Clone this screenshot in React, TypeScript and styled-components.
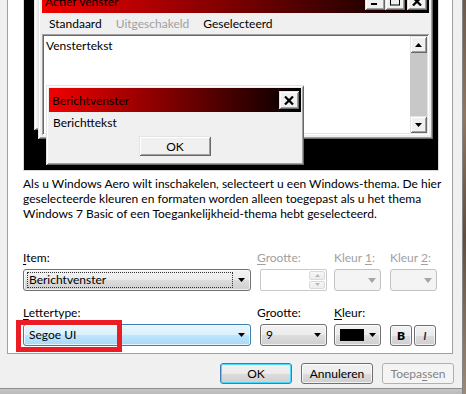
import React from "react";
import styled, { createGlobalStyle, css } from "styled-components";

const GlobalStyle = createGlobalStyle`
  html, body { margin: 0; padding: 0; }
  body {
    width: 466px; height: 394px; overflow: hidden; background: #f0f0f0;
    font-family: Lato, "Noto Sans", sans-serif; font-size: 12px; color: #000;
  }
  * { box-sizing: border-box; }
  u { text-decoration: underline; text-underline-offset: 2px; }
`;

const raised = css`
  background: #f0f0f0;
  box-shadow: inset 1px 1px 0 #e3e3e3, inset -1px -1px 0 #696969,
    inset 2px 2px 0 #ffffff, inset -2px -2px 0 #a0a0a0;
`;

const aeroButton = css`
  border: 1px solid #707070;
  border-radius: 3px;
  background: linear-gradient(180deg, #f2f2f2 0%, #ebebeb 50%, #dddddd 51%, #cfcfcf 100%);
  box-shadow: inset 0 0 0 1px rgba(255, 255, 255, 0.7);
`;

const Screen = styled.div`
  display: flex; width: 466px; height: 394px; overflow: hidden;
`;

const DialogWindow = styled.div`
  width: 463px; flex: none; display: flex; flex-direction: column;
  background: #f0f0f0; border-right: 1px solid #858585;
`;

const DesktopEdge = styled.div`
  flex: 1;
  background: linear-gradient(180deg, #6b5a4c 0%, #8f7661 30%, #5f4d3f 60%, #9b8a78 100%);
`;

const Panel = styled.div`
  margin-left: 7px; width: 446px; height: 354px; flex: none;
  background: #fff; border: 1px solid #a0a0a0; border-top: none;
  overflow: hidden; padding-left: 15px;
`;

const PreviewFrame = styled.div`
  margin-top: -21px; width: 416px; height: 192px;
  border: 1px solid #d9d9d9; background: #000;
  position: relative; overflow: hidden;
`;

const PreviewWindow = styled.div<{ $left: number; $top: number; $w: number; $h: number; $pad: number }>`
  position: absolute;
  left: ${(p) => p.$left}px; top: ${(p) => p.$top}px;
  width: ${(p) => p.$w}px; height: ${(p) => p.$h}px;
  padding: ${(p) => p.$pad}px;
  display: flex; flex-direction: column;
  ${raised}
`;

const TitleBar = styled.div<{ $inactive?: boolean }>`
  height: 24px; flex: none; display: flex; align-items: center;
  justify-content: space-between; padding: 0 2px 0 3px;
  background: ${(p) =>
    p.$inactive
      ? "linear-gradient(90deg, #808080, #c0c0c0)"
      : "linear-gradient(90deg, #f20000 0%, #000000 100%)"};
  color: #000; white-space: nowrap;
`;

const CaptionButtons = styled.div`
  display: flex; align-items: center;
`;

const CaptionButton = styled.div<{ $gapLeft?: number }>`
  width: 20px; height: 18px; display: flex; align-items: center; justify-content: center;
  margin-left: ${(p) => p.$gapLeft ?? 0}px;
  ${raised}
`;

const MenuBar = styled.div`
  height: 21px; flex: none; display: flex; align-items: center; background: #f0f0f0;
`;

const MenuItem = styled.span<{ $disabled?: boolean }>`
  padding: 0 7px; color: ${(p) => (p.$disabled ? "#a0a0a0" : "#000")};
`;

const ClientArea = styled.div`
  flex: 1; display: flex; padding: 2px; background: #fff;
  box-shadow: inset 1px 1px 0 #a0a0a0, inset -1px -1px 0 #ffffff,
    inset 2px 2px 0 #696969, inset -2px -2px 0 #e3e3e3;
`;

const ClientText = styled.div`
  flex: 1; padding: 2px 2px; line-height: 16px;
`;

const ScrollBar = styled.div`
  width: 17px; display: flex; flex-direction: column; background: #c8c8c8;
`;

const ScrollButton = styled.div`
  width: 17px; height: 17px; flex: none; display: flex; align-items: center; justify-content: center;
  ${raised}
`;

const ScrollTrack = styled.div`
  flex: 1;
`;

const MessageBody = styled.div`
  flex: 1; display: flex; flex-direction: column; align-items: center;
  padding-top: 3px;
`;

const MessageText = styled.div`
  align-self: stretch; padding-left: 4px; line-height: 16px;
`;

const ClassicButton = styled.div`
  margin-top: 5px; width: 72px; height: 20px; display: flex; align-items: center; justify-content: center;
  ${raised}
`;

const Explanation = styled.p`
  margin: 5px 0 29px; line-height: 15px; white-space: nowrap;
`;

const FormGrid = styled.div`
  display: grid; grid-template-columns: 237px 74px 56px 47px; row-gap: 14px;
`;

const Field = styled.div`
  display: flex; flex-direction: column; gap: 4px;
`;

const Label = styled.div<{ $disabled?: boolean; $shift?: number }>`
  height: 15px; line-height: 15px; white-space: nowrap;
  margin-left: ${(p) => p.$shift ?? 0}px;
  color: ${(p) => (p.$disabled ? "#a0a0a0" : "#000")};
`;

const HighlightAnchor = styled.div`
  position: relative;
`;

const RedHighlight = styled.div`
  position: absolute; left: -7px; top: -4px; width: 106px; height: 32px;
  border: 5px solid #ec1c24; pointer-events: none;
`;

const Combo = styled.div<{ $w: number; $variant?: "normal" | "hover" | "disabled" }>`
  width: ${(p) => p.$w}px; height: 22px; display: flex; align-items: center;
  padding: 0 0 0 3px; position: relative;
  ${aeroButton}
  ${(p) =>
    p.$variant === "hover" &&
    css`
      border-color: #3c7fb1;
      background: linear-gradient(180deg, #eaf6fd 0%, #d9f0fc 50%, #bee6fd 51%, #a7d9f5 100%);
    `}
  ${(p) =>
    p.$variant === "disabled" &&
    css`
      border-color: #bfc3c5;
      background: #f4f4f4;
      box-shadow: none;
    `}
`;

const ComboText = styled.div<{ $focus?: boolean }>`
  flex: 1; height: 16px; line-height: 14px; padding-left: 1px;
  border: 1px dotted ${(p) => (p.$focus ? "#333" : "transparent")};
  white-space: nowrap;
`;

const ArrowSlot = styled.div`
  width: 17px; height: 100%; flex: none; display: flex; align-items: center; justify-content: center;
`;

const Swatch = styled.div`
  width: 24px; height: 12px; background: #000; margin-left: 2px; flex: none;
`;

const SwatchFill = styled.div`
  flex: 1;
`;

const SpinBox = styled.div`
  width: 67px; height: 22px; display: flex; justify-content: flex-end;
  border: 1px solid #c9c9c9; border-radius: 2px; background: #fff; padding: 1px 1px 1px 0;
`;

const SpinButtons = styled.div`
  width: 16px; display: flex; flex-direction: column; gap: 1px;
`;

const SpinButton = styled.div`
  flex: 1; display: flex; align-items: center; justify-content: center;
  border: 1px solid #dadada; border-radius: 2px; background: linear-gradient(#f7f7f7, #ececec);
`;

const StyleButtons = styled.div`
  display: flex; gap: 2px; align-items: flex-end; height: 22px;
`;

const StyleButton = styled.div<{ $italic?: boolean }>`
  width: 22px; height: 21px; display: flex; align-items: center; justify-content: center;
  font-weight: ${(p) => (p.$italic ? 600 : 800)};
  font-style: ${(p) => (p.$italic ? "italic" : "normal")};
  color: ${(p) => (p.$italic ? "#1c1c50" : "#000")};
  ${aeroButton}
`;

const ButtonRow = styled.div`
  height: 34px; flex: none; display: flex; justify-content: flex-end; gap: 9px;
  padding: 9px 8px 0 0;
`;

const DialogButton = styled.div<{ $kind?: "default" | "normal" | "disabled" }>`
  width: 72px; height: 21px; display: flex; align-items: center; justify-content: center;
  ${aeroButton}
  ${(p) =>
    p.$kind === "default" &&
    css`
      border-color: #3c7fb1;
      box-shadow: inset 0 0 0 1px #48d8fb;
    `}
  ${(p) =>
    p.$kind === "disabled" &&
    css`
      border-color: #adb2b5;
      background: #f4f4f4;
      box-shadow: none;
      color: #838383;
    `}
`;

const BottomEdge = styled.div`
  margin-top: auto; height: 6px; flex: none;
  background: linear-gradient(180deg, #8e8e8e 0px, #8e8e8e 1px, #c6c6c6 1px, #b9b9b9 100%);
`;

const DownArrow = ({ color = "#000", w = 7, h = 4 }: { color?: string; w?: number; h?: number }) => (
  <svg width={w} height={h} viewBox={`0 0 ${w} ${h}`}>
    <path d={`M0 0H${w}L${w / 2} ${h}Z`} fill={color} />
  </svg>
);

const UpArrow = ({ color = "#000", w = 7, h = 4 }: { color?: string; w?: number; h?: number }) => (
  <svg width={w} height={h} viewBox={`0 0 ${w} ${h}`}>
    <path d={`M0 ${h}H${w}L${w / 2} 0Z`} fill={color} />
  </svg>
);

const CloseGlyph = () => (
  <svg width="10" height="9" viewBox="0 0 10 9">
    <path d="M1 0.5L9 8.5M9 0.5L1 8.5" stroke="#000" strokeWidth="2.2" />
  </svg>
);

const MinGlyph = () => (
  <svg width="10" height="10" viewBox="0 0 10 10">
    <rect x="1" y="7" width="6" height="2" fill="#000" />
  </svg>
);

const MaxGlyph = () => (
  <svg width="10" height="10" viewBox="0 0 10 10">
    <rect x="0.5" y="0.5" width="9" height="8.5" fill="none" stroke="#000" />
    <rect x="0" y="0" width="10" height="2" fill="#000" />
  </svg>
);

export default function App() {
  return (
    <>
      <GlobalStyle />
      <Screen>
        <DialogWindow>
          <Panel>
            <PreviewFrame>
              <PreviewWindow $left={10} $top={0} $w={372} $h={150} $pad={4}>
                <TitleBar $inactive />
              </PreviewWindow>
              <PreviewWindow $left={14} $top={5} $w={395} $h={154} $pad={4}>
                <TitleBar>
                  <span>Actief venster</span>
                  <CaptionButtons>
                    <CaptionButton><MinGlyph /></CaptionButton>
                    <CaptionButton><MaxGlyph /></CaptionButton>
                    <CaptionButton $gapLeft={2}><CloseGlyph /></CaptionButton>
                  </CaptionButtons>
                </TitleBar>
                <MenuBar>
                  <MenuItem>Standaard</MenuItem>
                  <MenuItem $disabled>Uitgeschakeld</MenuItem>
                  <MenuItem>Geselecteerd</MenuItem>
                </MenuBar>
                <ClientArea>
                  <ClientText>Venstertekst</ClientText>
                  <ScrollBar>
                    <ScrollButton><UpArrow /></ScrollButton>
                    <ScrollTrack />
                    <ScrollButton><DownArrow /></ScrollButton>
                  </ScrollBar>
                </ClientArea>
              </PreviewWindow>
              <PreviewWindow $left={22} $top={105} $w={258} $h={80} $pad={3}>
                <TitleBar>
                  <span>Berichtvenster</span>
                  <CaptionButton><CloseGlyph /></CaptionButton>
                </TitleBar>
                <MessageBody>
                  <MessageText>Berichttekst</MessageText>
                  <ClassicButton>OK</ClassicButton>
                </MessageBody>
              </PreviewWindow>
            </PreviewFrame>

            <Explanation>
              Als u Windows Aero wilt inschakelen, selecteert u een Windows-thema. De hier
              <br />
              geselecteerde kleuren en formaten worden alleen toegepast als u het thema
              <br />
              Windows 7 Basic of een Toegankelijkheid-thema hebt geselecteerd.
            </Explanation>

            <FormGrid>
              <Field>
                <Label><u>I</u>tem:</Label>
                <Combo $w={228}>
                  <ComboText $focus>Berichtvenster</ComboText>
                  <ArrowSlot><DownArrow /></ArrowSlot>
                </Combo>
              </Field>
              <Field>
                <Label $disabled $shift={-3}><u>G</u>rootte:</Label>
                <SpinBox>
                  <SpinButtons>
                    <SpinButton><UpArrow color="#b8b8b8" w={5} h={3} /></SpinButton>
                    <SpinButton><DownArrow color="#b8b8b8" w={5} h={3} /></SpinButton>
                  </SpinButtons>
                </SpinBox>
              </Field>
              <Field>
                <Label $disabled>Kleur <u>1</u>:</Label>
                <Combo $w={47} $variant="disabled">
                  <SwatchFill />
                  <ArrowSlot><DownArrow color="#a6a6a6" w={8} h={5} /></ArrowSlot>
                </Combo>
              </Field>
              <Field>
                <Label $disabled>Kleur <u>2</u>:</Label>
                <Combo $w={47} $variant="disabled">
                  <SwatchFill />
                  <ArrowSlot><DownArrow color="#a6a6a6" w={8} h={5} /></ArrowSlot>
                </Combo>
              </Field>

              <Field>
                <Label><u>L</u>ettertype:</Label>
                <HighlightAnchor>
                  <Combo $w={228} $variant="hover">
                    <ComboText>Segoe UI</ComboText>
                    <ArrowSlot><DownArrow /></ArrowSlot>
                  </Combo>
                  <RedHighlight />
                </HighlightAnchor>
              </Field>
              <Field>
                <Label $shift={-3}>G<u>r</u>ootte:</Label>
                <Combo $w={67}>
                  <ComboText>9</ComboText>
                  <ArrowSlot><DownArrow /></ArrowSlot>
                </Combo>
              </Field>
              <Field>
                <Label><u>K</u>leur:</Label>
                <Combo $w={47}>
                  <Swatch />
                  <SwatchFill />
                  <ArrowSlot><DownArrow /></ArrowSlot>
                </Combo>
              </Field>
              <Field>
                <Label>&nbsp;</Label>
                <StyleButtons>
                  <StyleButton>B</StyleButton>
                  <StyleButton $italic>I</StyleButton>
                </StyleButtons>
              </Field>
            </FormGrid>
          </Panel>
          <ButtonRow>
            <DialogButton $kind="default">OK</DialogButton>
            <DialogButton>Annuleren</DialogButton>
            <DialogButton $kind="disabled">Toepa<u>s</u>sen</DialogButton>
          </ButtonRow>
          <BottomEdge />
        </DialogWindow>
        <DesktopEdge />
      </Screen>
    </>
  );
}
